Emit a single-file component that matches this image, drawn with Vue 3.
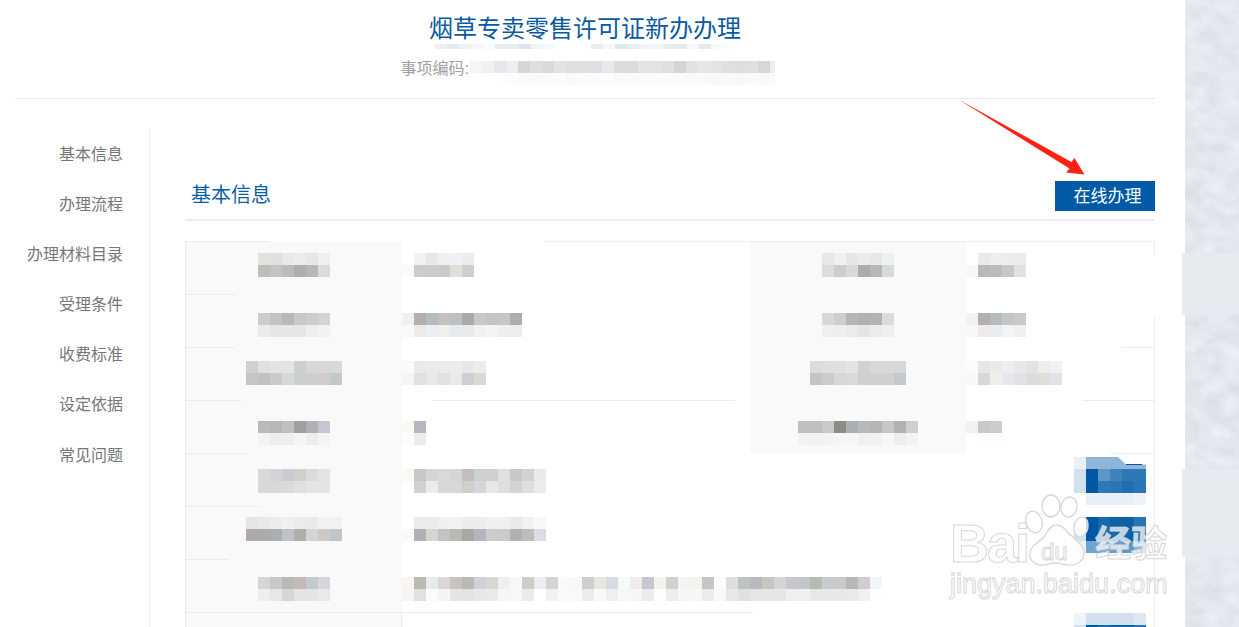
<template>
  <div class="page">
    <div class="main">
      <header class="head">
        <h1 class="title">烟草专卖零售许可证新办办理</h1>
        <div class="smear">
          <i v-for="(c, i) in titleSmear" :key="i" class="block" :style="{ background: c }"></i>
        </div>
        <div class="code">
          <span class="code-label">事项编码:</span>
          <div class="mosaic code-mosaic">
            <div v-for="(r, i) in codeMosaic" :key="i" class="mosaic-row">
              <i v-for="(c, j) in r" :key="j" class="block" :style="{ background: c }"></i>
            </div>
          </div>
        </div>
      </header>

      <div class="body">
        <nav class="side">
          <a v-for="item in menu" :key="item" class="side-item">{{ item }}</a>
        </nav>

        <section class="content">
          <div class="section-head">
            <h2 class="section-title">基本信息</h2>
            <button class="apply">在线办理</button>
          </div>

          <div class="table">
            <span class="border-gap"></span>
            <template v-for="(row, n) in rows" :key="n">
              <div class="sep" :style="lineStyle(row.line, n)"></div>
              <div class="row" :class="{ 'row-last': n === rows.length - 1 }" :style="{ paddingTop: row.top + 'px' }">
                <div
                  v-for="(cell, k) in row.cells"
                  :key="k"
                  class="cell"
                  :class="cell.kind"
                >
                  <div class="mosaic" v-if="cell.data">
                    <div v-for="(r, i) in cell.data" :key="i" class="mosaic-row">
                      <i v-for="(c, j) in r" :key="j" class="block" :style="{ background: c }"></i>
                    </div>
                  </div>
                  <div class="mosaic blue" v-if="cell.blue" :style="{ marginTop: cell.blueTop + 'px' }">
                    <div v-for="(r, i) in cell.blue" :key="i" class="mosaic-row">
                      <i v-for="(c, j) in r" :key="j" class="block" :style="{ background: c }"></i>
                    </div>
                    <svg v-if="cell.notch" class="notch" width="28" height="8" viewBox="0 0 28 8" aria-hidden="true">
                      <polygon points="0,0 8,7.4 28,7.4 28,0" fill="#fff" />
                      <rect x="8" y="7" width="16" height="1" fill="#0058a5" />
                    </svg>
                  </div>
                </div>
              </div>
            </template>
          </div>
        </section>
      </div>
    </div>

    <aside class="paper">
      <svg class="paper-tex" width="54" height="627" aria-hidden="true">
        <filter id="marble" x="0" y="0" width="100%" height="100%" color-interpolation-filters="sRGB">
          <feTurbulence type="fractalNoise" baseFrequency="0.05 0.07" numOctaves="5" seed="7" />
          <feColorMatrix type="matrix" values="0.1 0 0 0 0.84  0.1 0 0 0 0.86  0.08 0 0 0 0.895  0 0 0 0 1" />
        </filter>
        <rect width="54" height="627" filter="url(#marble)" />
      </svg>
      <span class="paper-smear smear-a"></span>
      <span class="paper-smear smear-b"></span>
    </aside>

    <svg class="arrow" width="140" height="90" viewBox="950 95 140 90" aria-hidden="true">
      <polygon points="958.5,99.5 1071.5,162 1074.5,158 1084.5,174.5 1066,172.5 1069.5,168.5" fill="#ff2214" />
    </svg>

    <div class="watermark">
      <svg class="paw" width="70" height="80" viewBox="1025 490 70 80" aria-hidden="true">
        <g fill="#fff" fill-opacity="0.78" stroke="#d8d8d8" stroke-width="1.4">
          <ellipse cx="1034" cy="522" rx="8" ry="11" transform="rotate(-18 1034 522)" />
          <ellipse cx="1051" cy="506" rx="9" ry="11" />
          <ellipse cx="1069" cy="507" rx="8" ry="10" transform="rotate(12 1069 507)" />
          <ellipse cx="1081" cy="527" rx="7" ry="10" transform="rotate(12 1081 527)" />
          <path d="M1056 525c8 0 11 8 18 13c6 5 10 10 10 15c0 9-9 13-17 12c-5-1-8-2-12-2c-5 0-8 3-15 2c-7-1-11-6-10-12c1-7 7-10 13-15c4-4 6-13 13-13z" />
        </g>
      </svg>
      <span class="wm wm-bai">Bai</span>
      <span class="wm wm-du">du</span>
      <span class="wm wm-jy">经验</span>
      <span class="wm wm-url">jingyan.baidu.com</span>
    </div>
  </div>
</template>

<script setup>
const menu = ['基本信息', '办理流程', '办理材料目录', '受理条件', '收费标准', '设定依据', '常见问题']

const hex = (s) => s.trim().split(/\s+/).map((c) => '#' + c)
const m = (...lines) => lines.map(hex)

const titleSmear = hex(
  'ebf0f5 e2e9f1 eef2f6 f5f7f9 fafbfc e8edf3 e8edf3 dce5ee f0f3f7 f6f8fa fff fff fff e8edf3 f5f7f9 dee6ee e8edf3 f0f3f7 f3f5f8 e8edf3 e4eaf0 f6f8fa e4eaf0 f8f9fb fbfcfd'
)

const codeMosaic = m(
  'f7f5f2 eef0f2 e4e8ec edeeed d5d6d7 dfdfdf d8dadd e6e2df dfe0e4 e1dfdf dcdfe3 e8e8e8 dcdcdc dbdbdb e4e4e4 e4e4e4 e0dfdd d4d4d4 e2e2e2 e6e6e6 e6e4e0 dfe0e4 e0dedd dde1e5 d9d7d6 eceef0',
  'fff fff fefefe fcfcfc fafafa fafafa fbfbfb fcfcfc f9f9f9 fbfbfb fbfbfb fcfcfc fafafa fafafa fafafa fcfcfc fbfbfb fbfbfb fafafa fafafa f8f8f8 f9f9f9 f8f8f8 fafafa f9f9f9 fafafa'
)

const cell = (kind, ...lines) => ({ kind, data: m(...lines) })
const blue = (lines, top, notch = false) => ({ blue: m(...lines), blueTop: top, notch })

const rows = [
  {
    top: 11,
    line: [[186, 268], [545, 1154]],
    cells: [
      cell('label', 'e2e2e0 e0e0e0 e8e8e8 ebebe9 e7e7e7 eff1f0', 'bfbdb9 c3c4c6 bcbcbc aeaeae b8b7b4 d8dcdc'),
      cell('value', 'fff f0f2f2 e8e8e8 efefed eff0f1 ececea', 'fafaf8 cccccc cfcacc cacacc e0e0da ccd0d1'),
      cell('label', 'e8e8e8 f0f0f0 e6e6e6 ecebe8 e7e7e7 eff1f0', 'dcdcda c9cdcc d9d9d5 acacac b7b7b4 d6dadc'),
      cell('value', 'fff eaeaea eeeeee eeedeb ebebeb', 'f9f8f6 b9b9b9 bbbcbc c7c7cb e1e1e3')
    ]
  },
  {
    top: 18,
    line: [[186, 236]],
    cells: [
      cell('label', 'cfcbc6 c1c2c5 b4babb c8c8c8 cdccc6 d3d4d7', 'ebebeb e8e6e5 e6e8e8 e6e6e6 efefef f2f2f2'),
      cell('value', 'f0f0f0 b5aeac b6bcbd c6c1bd bcc2c3 a9a9af cbc9c6 c4c4c4 c9c5c1 adadb1', 'f9f9f7 ecebea eeeef0 f0efed e7e9ec e9e9e9 f2f0f2 f3f4f7 eeeeee ededed'),
      cell('label', 'd8d8d6 cececc b5b7b6 b2b1af b3b3b3 d9dbde', 'f0f0f0 eeeeee ebebe9 e5e5e5 ececec efefef'),
      cell('value', 'f1f1f1 b5aeac b5bcbe c4c4c9 c9c9cb', 'f9f8f6 ecebe9 ebecf0 f4f4f4 efefef')
    ]
  },
  {
    top: 13,
    line: [[186, 235], [1121, 1154]],
    cells: [
      cell('label', 'd0d0d0 e0e0de e2e3e6 e4e4e2 cdcfcf d7d7d7 d8d8d6 d8d9db', 'c5c6c3 c0c1c5 c8cbc9 d8d8d6 cccfcf cfcfcf cfcdce c3c8c9'),
      cell('value', 'fbfaf6 eaeaec ebebed ebebe9 ececea e8e8ea ececeb', 'f6f5f3 e0e1e5 e8e8e6 e1e1e1 e9e9e9 cfced4 d8dad8'),
      cell('label', 'dcdcdc dfdedc e0e0e0 e3e3e1 d0d1d1 d8d8d8 d8d8d6 d6d7d9', 'c5c5c5 cbcbcb d6d8d7 d8dad9 cfd1d1 d0d0d0 d1cfcf c3c8ca'),
      cell('value', 'fcfbf9 e6e6e6 e9e9e9 eeeef1 e8e8e8 e2e2e2 ededed f0f1f4', 'f9f8f6 d6d8dc eeeeea e6e8f0 e0e2e5 dddcd9 dddddb e2e3e6')
    ]
  },
  {
    top: 20,
    line: [[186, 242], [432, 735], [1082, 1154]],
    cells: [
      cell('label', 'bbbab8 b5b8b7 bfc1bf a39f9f afb1b4 c4c7cf', 'f2f3f2 edeeec eeeeee f5f5f5 edefee f3f4f3'),
      cell('value', 'f9f8f3 b7b5bd', 'fcfcfa ececec'),
      cell('label', 'c0bfbd c0c0c2 c7cac8 8c8b85 a9b0b4 b7b8b8 b5b5b5 c8c5c6 b4b2af cfcfcf', 'f2f3f3 f2f2f2 f3f3f3 f6f6f6 f6f6f6 f0f0f0 f2f2f2 f7f7f7 efeeec f3f3f3'),
      cell('value', 'f3f0ed c6c8cb cccccc', 'fff fdfdfd fdfdfd')
    ]
  },
  {
    top: 15,
    line: [[186, 248], [1110, 1154]],
    cells: [
      cell('label', 'd9d9d6 d2d3d6 cdcbcf ced0cc dcddda e1e3e6', 'd9d9d9 d8d8d9 dcdbdc e0dedf e4e4e6 e5e5e7'),
      {
        ...cell('wide', 'fbf9f6 c7c7c7 d5d5d3 d9dad8 d5d7d4 c3bfbf ccd0cf cfcfd3 dfdfdf c8c8c8 d2d2d2 e9eaec', 'fff d0d1d5 edecec d8d8d8 d8d9d7 cfcfcb d5d6da e8e8e9 dedede d4d5d3 e0dfdb ebecee'),
        ...blue(['e9f0f8 8fb6d8 8fb6d8 8fb6d8 8fb6d8 8fb6d8', 'd3e1ef 0058a5 5f96c6 3f82bb 2f78b6 2d79b6', 'd3e1ef 0058a5 2f77b6 2a75b5 1f6eb1 2b77b5', 'fff e8eff8 e8eff8 e8eff8 e8eff8 eef3f9'], -12, true)
      }
    ]
  },
  {
    top: 10,
    line: [[186, 260]],
    cells: [
      cell('label', 'e5e5e5 e9e9e9 ebecee f0f0f0 ecebe9 eaeae8 f0f1f3 f1f1ef', 'aeaaa8 a9abae a9aeae c0c2c5 b1aeaa d4d4d4 cdc9c7 c0c6c7'),
      {
        ...cell('wide', 'fff ebebeb ebebeb f0f0f0 f2f2f2 ececec ededeb f0f0f0 f0f0ee eaeaea f1f1f1 f7f8fa', 'faf9f7 b0b1b4 d5d5d2 c3c4c2 b8b9b7 aaa7a0 b5b6bd cdcbcb cccacb b1b1b1 bebebc dcdde2'),
        ...blue(['fff 0058a5 1a69ae 0e62aa 0c61a9 2a76b4', 'd3e1ef 0058a5 2673b4 1a69ae 0e62aa 2a76b4', 'e9f0f8 6fa3d0 7fb0d8 6ba1cf 5d97c9 8ab6db'], 0)
      }
    ]
  },
  {
    top: 17,
    line: [[186, 228]],
    cells: [
      cell('label', 'd5d5d5 c8cac9 b9bab4 c3b9bb c3cacf d6d6da', 'eeeeec e7e7e7 d6d6d6 e6e3e4 e3e5e7 e9e9e9'),
      cell('wide',
        'f9f5f0 b8bab3 e7ebed d9d8d6 c8c3c0 b9bab3 cfd3d6 d8d6d3 eeeff1 f8f8f8 cecec9 ebeef1 d6d3d5 f9fbfb f7f8f8 cfcfcb e9e6e2 d8dbe3 f6fafb f0ece9 c5c8cf f3f2ec d0d0d0 f2f4f6 f4f2ef c6c6c6 fcfdff dfdedc bdc3c2 b8babd c6c7c2 d5d5d5 c6c7ca c3c6c9 b8bab5 c6cbcd cbc8ca b8b8bc d2ced0 f2f6f8',
        'f8f6f4 e1e1df f8fcfd f4f4f4 e6e5e6 e4e3e1 e6e8eb ebe9e7 f4f6f8 f8f8f8 ebebeb fff f1f1f2 f8fafa f9f9f8 ebebe9 fbf9f6 edeff1 f7f9f9 f6f6f4 ebecf0 fefdfb ededed f5f6f8 f8f7f4 e9ebee f9f9f7 e8e6e8 dfe2e1 e5e5e5 e6e6e6 e6e6e8 eeefef eeefef e8e8e6 e7e9e8 e9e8e8 e9e9e9 f0f0f0 fefefe')
    ]
  },
  {
    top: 0,
    line: [[186, 753]],
    cells: [
      { kind: 'label' },
      {
        kind: 'wide',
        ...blue(['f0f5fa d3e1ef d3e1ef d3e1ef d3e1ef dce8f2', 'd3e1ef 0058a5 1a69ae 0e62aa 0c61a9 2a76b4'], 0)
      }
    ]
  }
]

// row rules only survive in patches under the blur, segments are page x
const lineStyle = (segs, n) => {
  const c = '#ececec'
  const stops = []
  for (const [a, b] of segs) {
    const x0 = a - 186
    const x1 = b - 186
    stops.push(`transparent ${x0}px`, `${c} ${x0}px`, `${c} ${x1}px`, `transparent ${x1}px`)
  }
  const bg = n < 4
    ? 'linear-gradient(90deg, #f9f9f9 216px, transparent 216px, transparent 564px, #f9f9f9 564px, #f9f9f9 780px, transparent 780px)'
    : 'linear-gradient(90deg, #f9f9f9 216px, transparent 216px)'
  return { backgroundImage: `linear-gradient(90deg, ${stops.join(', ')}), ${bg}` }
}
</script>

<style scoped>
.page {
  position: relative;
  display: flex;
  width: 1239px;
  height: 627px;
  overflow: hidden;
  background: #fff;
  font-family: "Liberation Sans", "Noto Sans CJK SC", sans-serif;
}

.main {
  width: 1185px;
  flex-shrink: 0;
  padding: 0 30px 0 15px;
  box-sizing: border-box;
}

.head {
  height: 99px;
  box-sizing: border-box;
  padding-top: 14px;
  border-bottom: 1px solid #e8e8e8;
}
.title {
  margin: 0;
  text-align: center;
  font-size: 24px;
  line-height: 30px;
  font-weight: 400;
  color: #0b5a9f;
}
.smear {
  display: flex;
  justify-content: center;
  height: 5px;
}
.smear .block {
  height: 5px;
}
.code {
  display: flex;
  justify-content: center;
  margin-top: 12px;
  padding-left: 5px;
}
.code-label {
  font-size: 16px;
  line-height: 14px;
  color: #a0a0a0;
  width: 69px;
  padding-top: 1px;
}
.code-mosaic {
  width: 305px;
  overflow: hidden;
}

.mosaic-row {
  display: flex;
}
.block {
  display: block;
  flex: none;
  width: 12px;
  height: 12px;
}

.body {
  display: flex;
  margin-top: 29px;
}

.side {
  width: 135px;
  flex-shrink: 0;
  height: 500px;
  box-sizing: border-box;
  padding: 2px 26px 0 0;
  border-right: 1px solid #ececec;
  display: flex;
  flex-direction: column;
  align-items: flex-end;
}
.side-item {
  height: 50.1px;
  line-height: 50px;
  font-size: 16px;
  color: #777;
  white-space: nowrap;
}

.content {
  flex: 1;
  padding: 53px 0 0 35px;
  min-width: 0;
}
.section-head {
  display: flex;
  justify-content: space-between;
  align-items: flex-start;
  height: 40px;
  padding-left: 6px;
  border-bottom: 2px solid #ececec;
  box-sizing: border-box;
}
.section-title {
  margin: 0;
  font-size: 20px;
  line-height: 28px;
  font-weight: 400;
  color: #0b5fa8;
}
.apply {
  width: 100px;
  height: 30px;
  border: 0;
  padding: 2px 0 0 5px;
  box-sizing: border-box;
  background: #005aa5;
  color: #fff;
  font: inherit;
  font-size: 17px;
  line-height: 28px;
}

.table {
  position: relative;
  margin-top: 20px;
  width: 970px;
  box-sizing: border-box;
  border-left: 1px solid #ececec;
  border-right: 1px solid #ececec;
}
.border-gap {
  position: absolute;
  right: -1px;
  top: 14px;
  width: 1px;
  height: 62px;
  background: #fff;
}
.sep {
  height: 1px;
}
.row {
  display: flex;
  height: 52px;
  box-sizing: border-box;
  overflow: hidden;
}
.cell {
  flex: none;
}
.cell.label {
  width: 216px;
  height: 52px;
  display: flex;
  justify-content: center;
  position: relative;
}
/* fills the whole row height, the row padding would leave a gap on top */
.cell.label::before {
  content: "";
  position: absolute;
  left: 0;
  right: 0;
  top: -30px;
  bottom: -30px;
  background: #f9f9f9;
}
.cell.label .mosaic {
  position: relative;
}
.cell.value {
  width: 348px;
}
.cell.value:last-child {
  width: auto;
}
.cell.wide {
  flex: 1;
  display: flex;
  justify-content: space-between;
  align-items: flex-start;
  padding-right: 8px;
}
.blue {
  position: relative;
  margin-left: auto;
}
.notch {
  position: absolute;
  right: 0;
  top: 0;
}
.row-last .cell.label {
  box-sizing: border-box;
  border-right: 1px solid #ececec;
}

.paper {
  position: relative;
  flex: 1;
}
.paper-tex {
  display: block;
}
.paper-smear {
  position: absolute;
  left: -3px;
  width: 57px;
  background: #e6ebf0;
}
.smear-a {
  top: 253px;
  height: 62px;
}
.smear-b {
  top: 469px;
  height: 88px;
}

.arrow {
  position: absolute;
  left: 950px;
  top: 95px;
}

.watermark {
  position: absolute;
  left: 0;
  top: 0;
  width: 0;
  height: 0;
}
.paw {
  position: absolute;
  left: 1025px;
  top: 490px;
}
.wm {
  position: absolute;
  line-height: 1;
  white-space: nowrap;
  color: rgba(255, 255, 255, 0.72);
  -webkit-text-stroke: 1px #d8d8d8;
}
.wm-bai {
  left: 950px;
  top: 521px;
  height: 44px;
  line-height: 44px;
  font-size: 54px;
  font-weight: 700;
  letter-spacing: -2px;
}
.wm-du {
  left: 1041px;
  top: 540px;
  font-size: 24px;
}
.wm-jy {
  left: 1095px;
  top: 527px;
  font-size: 36px;
  font-weight: 700;
}
.wm-url {
  left: 950px;
  top: 571px;
  font-size: 27px;
}
</style>
